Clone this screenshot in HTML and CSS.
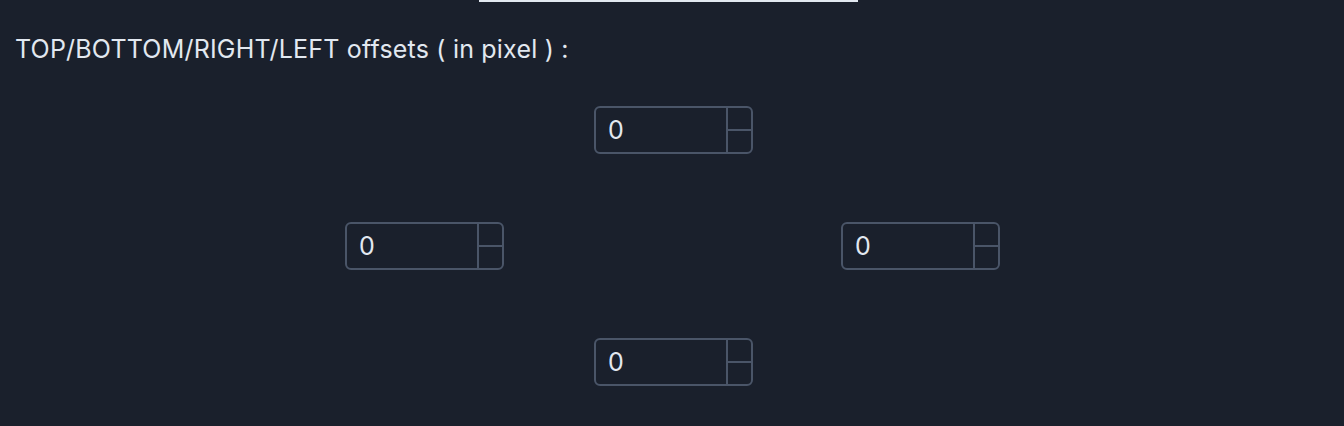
FILE: index.html
```html
<!DOCTYPE html>
<html>
<head>
<meta charset="utf-8">
<link rel="stylesheet" href="styles.css">
</head>
<body>
<div class="page">
  <div class="topbar"><div class="topbar-line"></div></div>
  <div class="label">TOP/BOTTOM/RIGHT/LEFT offsets ( in pixel ) :</div>
  <div class="grid">
    <div class="cell c2">
      <div class="num"><div class="num-field">0</div><div class="stepper"><div class="step"></div><div class="step"></div></div></div>
    </div>
    <div class="cell c1">
      <div class="num"><div class="num-field">0</div><div class="stepper"><div class="step"></div><div class="step"></div></div></div>
    </div>
    <div class="cell c3">
      <div class="num"><div class="num-field">0</div><div class="stepper"><div class="step"></div><div class="step"></div></div></div>
    </div>
    <div class="cell c2">
      <div class="num"><div class="num-field">0</div><div class="stepper"><div class="step"></div><div class="step"></div></div></div>
    </div>
  </div>
</div>
</body>
</html>
```

FILE: styles.css
```css
html, body {
  margin: 0;
  padding: 0;
  background: #1a202c;
}
body {
  width: 1344px;
  height: 426px;
  overflow: hidden;
  font-family: Inter, "Liberation Sans", Arial, sans-serif;
  color: #e2e8f0;
}
.page {
  display: flex;
  flex-direction: column;
}
.topbar {
  display: flex;
  justify-content: flex-start;
  padding-left: 479px;
}
.topbar-line {
  width: 379px;
  height: 2px;
  background: #e2e8f0;
}
.label {
  margin-top: 33px;
  padding-left: 15px;
  font-size: 25px;
  letter-spacing: 0.2px;
  line-height: 28px;
}
.grid {
  margin-top: 43px;
  display: grid;
  grid-template-columns: 249px 247px 159px;
  grid-auto-rows: 48px;
  row-gap: 68px;
  padding-left: 345px;
}
.c1 { grid-column: 1; }
.c2 { grid-column: 2; }
.c3 { grid-column: 3; }
.num {
  box-sizing: border-box;
  width: 159px;
  height: 48px;
  border: 2px solid #4a5568;
  border-radius: 6px;
  display: flex;
}
.num-field {
  flex: 1;
  padding-left: 12px;
  font-size: 25px;
  line-height: 44px;
}
.stepper {
  width: 23px;
  display: flex;
  flex-direction: column;
  border-left: 2px solid #4a5568;
}
.step {
  flex: 1;
}
.step + .step {
  border-top: 2px solid #4a5568;
}
```
